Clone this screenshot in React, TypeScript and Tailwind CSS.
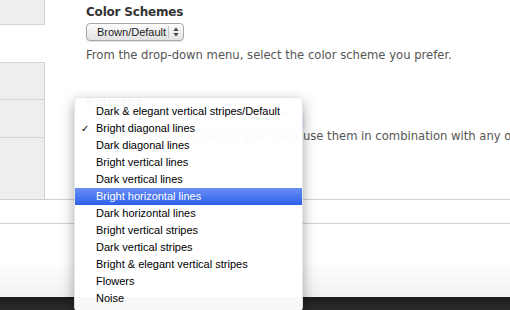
const schemes = [
  "Dark & elegant vertical stripes/Default",
  "Bright diagonal lines",
  "Dark diagonal lines",
  "Bright vertical lines",
  "Dark vertical lines",
  "Bright horizontal lines",
  "Dark horizontal lines",
  "Bright vertical stripes",
  "Dark vertical stripes",
  "Bright & elegant vertical stripes",
  "Flowers",
  "Noise",
]

const selected = 1
const hovered = 5

const Arrows = () => (
  <svg width="6" height="10" viewBox="0 0 6 10" className="block">
    <path d="M3 0.5 L5.6 4 L0.4 4 Z" fill="#444" />
    <path d="M3 9.5 L5.6 6 L0.4 6 Z" fill="#444" />
  </svg>
)

const App = () => {
  return (
    <div className="relative w-[510px] h-[310px] overflow-hidden bg-white font-['DejaVu_Sans',sans-serif]">
      <div className="flex h-[200px] border-b border-[#d0d0d0]">
        {/* left label column */}
        <div className="w-[45px] shrink-0 flex flex-col">
          <div className="h-[25px] bg-[#eeeeee] border-r border-b border-[#d4d4d4]" />
          <div className="h-[37px]" />
          <div className="h-[38px] bg-[#eeeeee] border-r border-t border-b border-[#d4d4d4]" />
          <div className="h-[38px] bg-[#eeeeee] border-r border-b border-[#d4d4d4]" />
          <div className="flex-1 bg-[#eeeeee] border-r border-[#d4d4d4]" />
        </div>

        <div className="flex-1 min-w-0 overflow-hidden pl-[41px] pt-[4px] flex flex-col items-start">
          <h2 className="text-[12px] leading-[16px] font-bold tracking-[-0.2px] text-[#333]">Color Schemes</h2>

          <div className="mt-[3px] h-[18px] w-[98px] rounded-[4px] border border-[#a8a8a8] bg-gradient-to-b from-[#fdfdfd] to-[#e2e2e2] shadow-[0_1px_1px_rgba(0,0,0,0.12)] flex items-center">
            <span className="flex-1 pl-[10px] text-[11px] leading-none text-[#1c1c1c] font-['Liberation_Sans',sans-serif]">
              Brown/Default
            </span>
            <div className="h-[12px] border-l border-[#c4c4c4]" />
            <div className="w-[14px] flex justify-center">
              <Arrows />
            </div>
          </div>

          <p className="mt-[7px] text-[11.6px] leading-[14px] text-[#555] whitespace-nowrap">
            From the drop-down menu, select the color scheme you prefer.
          </p>

          <h2 className="mt-[32px] text-[12px] leading-[16px] font-bold tracking-[-0.2px] text-[#333]">Patterns</h2>

          <div className="mt-[3px] h-[17px] w-[215px] rounded-[4px] border border-[#7fa7e6] bg-gradient-to-b from-[#fdfdfd] to-[#e2e2e2] shadow-[0_0_3px_2px_rgba(110,160,240,0.6)]" />

          <p className="mt-[-1px] text-[11.6px] leading-[14px] text-[#555] whitespace-nowrap">
            Patterns were designed so you could use them in combination with any other color scheme.
          </p>
        </div>
      </div>

      <div className="h-[24px] border-b border-[#d0d0d0]" />
      <div className="h-[73px] bg-gradient-to-b from-white via-white to-[#f1f1f1]" />
      <div className="h-[13px] bg-gradient-to-b from-[#1c1c1c] to-[#2c2c2c]" />

      {/* open drop-down menu */}
      <div className="absolute left-[74px] top-[97px] w-[229px] pt-[5px] pb-[4px] rounded-[5px] bg-white/[0.97] border border-black/10 shadow-[0_5px_14px_rgba(0,0,0,0.35)] font-['Liberation_Sans',sans-serif]">
        {schemes.map((name, i) => (
          <div
            key={name}
            className={
              i === hovered
                ? "relative h-[17px] pl-[21px] flex items-center text-[11px] text-white bg-gradient-to-b from-[#6a8ef5] to-[#2c5fea]"
                : "relative h-[17px] pl-[21px] flex items-center text-[11px] text-black"
            }
          >
            {i === selected && (
              <span className="absolute left-[6px] top-[1px] text-[10px] font-['DejaVu_Sans',sans-serif]">✓</span>
            )}
            {name}
          </div>
        ))}
      </div>
    </div>
  )
}

export default App
